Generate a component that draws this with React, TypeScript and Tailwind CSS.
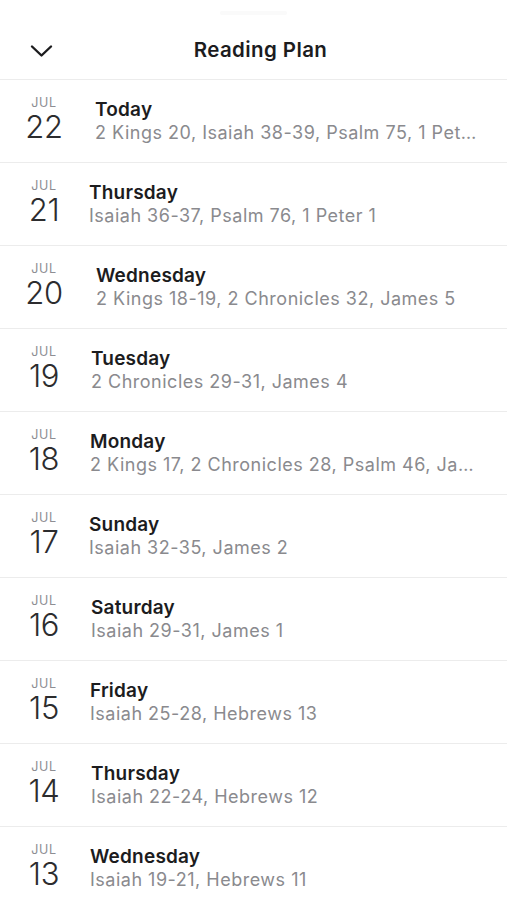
const days = [
  { month: "JUL", day: "22", title: "Today", refs: "2 Kings 20, Isaiah 38-39, Psalm 75, 1 Peter 2", pad: "pl-[25px]" },
  { month: "JUL", day: "21", title: "Thursday", refs: "Isaiah 36-37, Psalm 76, 1 Peter 1", pad: "pl-[19px]" },
  { month: "JUL", day: "20", title: "Wednesday", refs: "2 Kings 18-19, 2 Chronicles 32, James 5", pad: "pl-[26px]" },
  { month: "JUL", day: "19", title: "Tuesday", refs: "2 Chronicles 29-31, James 4", pad: "pl-[21px]" },
  { month: "JUL", day: "18", title: "Monday", refs: "2 Kings 17, 2 Chronicles 28, Psalm 46, James 3", pad: "pl-[20px]" },
  { month: "JUL", day: "17", title: "Sunday", refs: "Isaiah 32-35, James 2", pad: "pl-[19px]" },
  { month: "JUL", day: "16", title: "Saturday", refs: "Isaiah 29-31, James 1", pad: "pl-[21px]" },
  { month: "JUL", day: "15", title: "Friday", refs: "Isaiah 25-28, Hebrews 13", pad: "pl-[20px]" },
  { month: "JUL", day: "14", title: "Thursday", refs: "Isaiah 22-24, Hebrews 12", pad: "pl-[21px]" },
  { month: "JUL", day: "13", title: "Wednesday", refs: "Isaiah 19-21, Hebrews 11", pad: "pl-[20px]" },
];

export default function App() {
  return (
    <div className="w-[507px] h-[900px] overflow-hidden bg-white font-['Inter',sans-serif] text-[#1c1c1e]">
      {/* Header */}
      <div className="relative h-[80px] border-b border-[#ececec]">
        <div className="absolute left-[220px] top-[11px] w-[67px] h-[4px] rounded-full bg-[#fafafa]" />
        <div className="flex items-center h-full pt-[22px]">
          <svg className="ml-[30px] w-[23px] h-[14px]" viewBox="0 0 23 14" fill="none">
            <path d="M2 2.5 L11.5 11.5 L21 2.5" stroke="#1c1c1e" strokeWidth="2.4" strokeLinecap="round" strokeLinejoin="round" />
          </svg>
          <div className="flex-1 text-center pr-[39px] text-[20.5px] font-semibold tracking-[0.4px]">
            Reading Plan
          </div>
        </div>
      </div>

      {/* Days */}
      {days.map((d, i) => (
        <div key={i} className="flex items-center h-[83px] border-b border-[#ececec]">
          <div className="w-[70px] pl-[18px] pb-[3px] flex flex-col items-center">
            <span className="text-[12.5px] leading-[15px] text-[#8e8e93] tracking-[0.6px]">{d.month}</span>
            <span className="text-[31px] leading-[34px] font-light text-[#2c2c2e] tracking-[-0.3px]">{d.day}</span>
          </div>
          <div className={`flex-1 min-w-0 pr-[24px] ${d.pad}`}>
            <div className="text-[19px] leading-[23px] font-semibold tracking-[0.2px]">{d.title}</div>
            <div className="text-[18px] leading-[23px] text-[#8a8a8e] truncate tracking-[0.5px]">{d.refs}</div>
          </div>
        </div>
      ))}
    </div>
  );
}
